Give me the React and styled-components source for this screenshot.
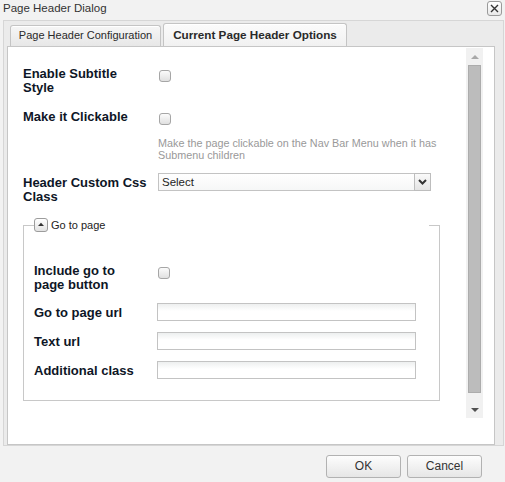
import React from "react";
import styled, { createGlobalStyle } from "styled-components";

const GlobalStyle = createGlobalStyle`
  html, body { margin: 0; padding: 0; background: #f2f2f2; }
  body {
    width: 505px; height: 482px; overflow: hidden;
    font-family: "Liberation Sans", Arial, sans-serif;
  }
  * { box-sizing: border-box; }
`;

const Dialog = styled.div`
  width: 505px;
  height: 482px;
  display: flex;
  flex-direction: column;
  background: #f2f2f2;
`;

const TitleBar = styled.div`
  height: 20px;
  display: flex;
  align-items: flex-start;
  justify-content: space-between;
  padding: 0 3px;
`;

const Title = styled.div`
  font-size: 11.5px;
  line-height: 17px;
  color: #333;
`;

const CloseButton = styled.div`
  width: 15px;
  height: 15px;
  margin-top: 1px;
  border: 1px solid #9a9a9a;
  border-radius: 3px;
  background: linear-gradient(#ffffff, #e9e9e9);
  display: flex;
  align-items: center;
  justify-content: center;
`;

const OuterPanel = styled.div`
  margin: 0 1px 0 3px;
  height: 426px;
  border: 1px solid #d6d6d6;
  background: #ebebeb;
  display: flex;
  flex-direction: column;
`;

const TabBar = styled.div`
  height: 25px;
  display: flex;
  align-items: flex-end;
  gap: 2px;
  padding-left: 6px;
`;

const Tab = styled.div`
  width: ${(p) => p.$w}px;
  height: ${(p) => (p.$active ? 23 : 21)}px;
  border: 1px solid #c4c4c4;
  border-bottom: none;
  border-radius: 3px 3px 0 0;
  text-align: center;
  color: #2a2a2a;
  font-size: ${(p) => (p.$active ? 11.7 : 11)}px;
  font-weight: ${(p) => (p.$active ? 700 : 400)};
  line-height: ${(p) => (p.$active ? 22 : 19)}px;
  background: ${(p) =>
    p.$active
      ? "linear-gradient(#fbfbfb, #f1f1f1)"
      : "linear-gradient(#f6f6f6, #e7e7e7)"};
  box-shadow: inset 0 1px 0 #ffffff;
  white-space: nowrap;
`;

const ContentPanel = styled.div`
  margin-left: 3px;
  width: 488px;
  height: 399px;
  border: 1px solid #c6c6c6;
  background: #ffffff;
  display: flex;
  align-items: flex-start;
`;

const FormArea = styled.div`
  flex: 1;
  padding: 20px 0 0 15px;
`;

const Row = styled.div`
  display: grid;
  grid-template-columns: ${(p) => p.$label}px auto;
  column-gap: 9px;
  align-items: start;
  margin-top: ${(p) => p.$mt || 0}px;
`;

const Label = styled.div`
  font-size: 13px;
  line-height: 14px;
  font-weight: 700;
  color: #0e1626;
  padding-top: ${(p) => p.$pt || 0}px;
`;

const Control = styled.div`
  display: flex;
  flex-direction: column;
  align-items: flex-start;
`;

const Checkbox = styled.input.attrs({ type: "checkbox" })`
  appearance: none;
  -webkit-appearance: none;
  width: 12px;
  height: 12px;
  margin: 3px 0 0 ${(p) => p.$ml || 0}px;
  border: 1px solid #a6a6a6;
  border-radius: 3px;
  background: linear-gradient(#fbfbfb, #e0e0e0);
`;

const Hint = styled.div`
  margin-top: 12px;
  font-size: 10.8px;
  line-height: 12px;
  color: #999999;
`;

const SelectBox = styled.div`
  width: 273px;
  height: 18px;
  border: 1px solid #c3c3c3;
  display: flex;
  background: linear-gradient(#ffffff, #f6f7f7);
`;

const SelectText = styled.div`
  flex: 1;
  padding: 1px 0 0 3px;
  font-size: 11.5px;
  line-height: 15px;
  color: #1e1e1e;
`;

const SelectButton = styled.div`
  width: 17px;
  height: 18px;
  margin: -1px -1px 0 0;
  border: 1px solid #bdbdbd;
  background: linear-gradient(#fafafa, #e4e4e4);
  display: flex;
  align-items: center;
  justify-content: center;
`;

const Fieldset = styled.fieldset`
  width: 417px;
  margin: 14px 0 0 0;
  padding: 0 10px 21px;
  border: 1px solid #c8c8c8;
  min-width: 0;
`;

const Legend = styled.legend`
  width: 100%;
  padding: 0;
  height: 14px;
  display: flex;
  align-items: center;
  gap: 3px;
  font-size: 11px;
  line-height: 14px;
  color: #222;
`;

const LegendButton = styled.div`
  width: 14px;
  height: 14px;
  border: 1px solid #9c9c9c;
  border-radius: 3px;
  background: linear-gradient(#ffffff, #e2e2e2);
  display: flex;
`;

const TextInput = styled.input.attrs({ type: "text" })`
  width: 259px;
  height: 18px;
  margin: 0;
  padding: 0 3px;
  border: 1px solid #c3c3c3;
  background: linear-gradient(#edefef, #ffffff 7px);
  outline: none;
`;

const ScrollTrack = styled.div`
  width: 17px;
  height: 370px;
  margin: 1px 11px 0 0;
  background: #f1f1f1;
  display: flex;
  flex-direction: column;
  align-items: center;
`;

const ScrollArrow = styled.div`
  height: 17px;
  width: 17px;
  display: flex;
  align-items: ${(p) => (p.$down ? "flex-start" : "flex-end")};
  justify-content: center;
  padding: ${(p) => (p.$down ? "7px 0 0" : "0 0 6px")};
`;

const ScrollThumb = styled.div`
  width: 13px;
  height: 328px;
  background: #bcbcbc;
  border: 1px solid #acacac;
`;

const Spacer = styled.div`
  flex: 1;
`;

const Footer = styled.div`
  flex: 1;
  display: flex;
  justify-content: flex-end;
  align-items: flex-start;
  gap: 6px;
  padding: 9px 23px 0 0;
`;

const Button = styled.button`
  width: 75px;
  height: 23px;
  margin: 0;
  padding: 0;
  border: 1px solid #b2b2b2;
  border-radius: 3px;
  background: linear-gradient(#fdfdfd, #e6e6e6);
  font-family: "Liberation Sans", Arial, sans-serif;
  font-size: 12px;
  line-height: 21px;
  color: #333;
`;

export default function App() {
  return (
    <Dialog>
      <GlobalStyle />
      <TitleBar>
        <Title>Page Header Dialog</Title>
        <CloseButton>
          <svg width="11" height="11" viewBox="0 0 11 11">
            <path d="M2 2 L9 9 M9 2 L2 9" stroke="#333" strokeWidth="1.4" />
          </svg>
        </CloseButton>
      </TitleBar>
      <OuterPanel>
        <TabBar>
          <Tab $w={151}>Page Header Configuration</Tab>
          <Tab $w={184} $active>
            Current Page Header Options
          </Tab>
        </TabBar>
        <ContentPanel>
          <FormArea>
            <Row $label={126}>
              <Label>Enable Subtitle Style</Label>
              <Control>
                <Checkbox $ml={1} />
              </Control>
            </Row>
            <Row $label={126} $mt={15}>
              <Label>Make it Clickable</Label>
              <Control>
                <Checkbox $ml={1} />
                <Hint>
                  Make the page clickable on the Nav Bar Menu when it has
                  <br />
                  Submenu children
                </Hint>
              </Control>
            </Row>
            <Row $label={126} $mt={12}>
              <Label $pt={3}>Header Custom Css Class</Label>
              <Control>
                <SelectBox>
                  <SelectText>Select</SelectText>
                  <SelectButton>
                    <svg width="11" height="8" viewBox="0 0 11 8">
                      <path
                        d="M2 2 L5.5 5.5 L9 2"
                        fill="none"
                        stroke="#333"
                        strokeWidth="2"
                      />
                    </svg>
                  </SelectButton>
                </SelectBox>
              </Control>
            </Row>
            <Fieldset>
              <Legend>
                <LegendButton>
                  <svg width="12" height="12" viewBox="0 0 12 12">
                    <path d="M3 7 L6 3.8 L9 7 Z" fill="#333" />
                  </svg>
                </LegendButton>
                Go to page
              </Legend>
              <Row $label={114} $mt={32}>
                <Label>Include go to page button</Label>
                <Control>
                  <Checkbox $ml={1} />
                </Control>
              </Row>
              <Row $label={114} $mt={11}>
                <Label $pt={3}>Go to page url</Label>
                <TextInput />
              </Row>
              <Row $label={114} $mt={11}>
                <Label $pt={3}>Text url</Label>
                <TextInput />
              </Row>
              <Row $label={114} $mt={11}>
                <Label $pt={3}>Additional class</Label>
                <TextInput />
              </Row>
            </Fieldset>
          </FormArea>
          <ScrollTrack>
            <ScrollArrow>
              <svg width="8" height="4" viewBox="0 0 8 4">
                <path d="M0 4 L4 0 L8 4 Z" fill="#a8a8a8" />
              </svg>
            </ScrollArrow>
            <ScrollThumb />
            <Spacer />
            <ScrollArrow $down>
              <svg width="8" height="4" viewBox="0 0 8 4">
                <path d="M0 0 L8 0 L4 4 Z" fill="#505050" />
              </svg>
            </ScrollArrow>
          </ScrollTrack>
        </ContentPanel>
      </OuterPanel>
      <Footer>
        <Button>OK</Button>
        <Button>Cancel</Button>
      </Footer>
    </Dialog>
  );
}
